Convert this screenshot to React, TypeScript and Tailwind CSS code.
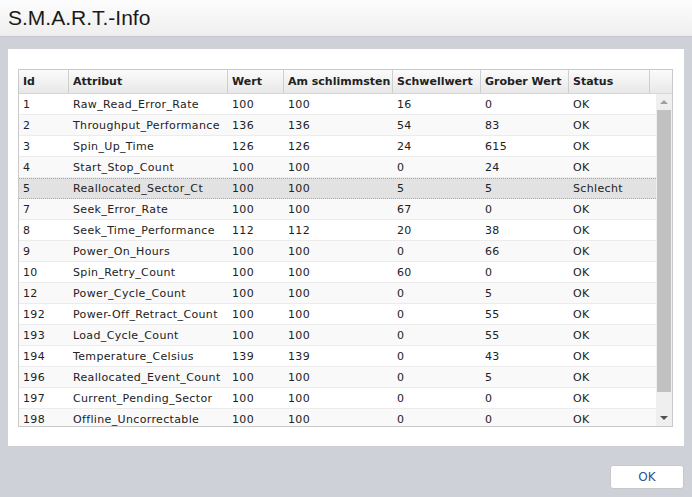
import React from 'react';

const rows: [string, string, string, string, string, string, string][] = [
  ['1', 'Raw_Read_Error_Rate', '100', '100', '16', '0', 'OK'],
  ['2', 'Throughput_Performance', '136', '136', '54', '83', 'OK'],
  ['3', 'Spin_Up_Time', '126', '126', '24', '615', 'OK'],
  ['4', 'Start_Stop_Count', '100', '100', '0', '24', 'OK'],
  ['5', 'Reallocated_Sector_Ct', '100', '100', '5', '5', 'Schlecht'],
  ['7', 'Seek_Error_Rate', '100', '100', '67', '0', 'OK'],
  ['8', 'Seek_Time_Performance', '112', '112', '20', '38', 'OK'],
  ['9', 'Power_On_Hours', '100', '100', '0', '66', 'OK'],
  ['10', 'Spin_Retry_Count', '100', '100', '60', '0', 'OK'],
  ['12', 'Power_Cycle_Count', '100', '100', '0', '5', 'OK'],
  ['192', 'Power-Off_Retract_Count', '100', '100', '0', '55', 'OK'],
  ['193', 'Load_Cycle_Count', '100', '100', '0', '55', 'OK'],
  ['194', 'Temperature_Celsius', '139', '139', '0', '43', 'OK'],
  ['196', 'Reallocated_Event_Count', '100', '100', '0', '5', 'OK'],
  ['197', 'Current_Pending_Sector', '100', '100', '0', '0', 'OK'],
  ['198', 'Offline_Uncorrectable', '100', '100', '0', '0', 'OK'],
];

const headers = ['Id', 'Attribut', 'Wert', 'Am schlimmsten', 'Schwellwert', 'Grober Wert', 'Status'];
const widths = ['w-[50px]', 'w-[159px]', 'w-[56px]', 'w-[109px]', 'w-[88px]', 'w-[88px]', 'w-[81px]'];

export default function App() {
  return (
    <div className="w-[692px] h-[497px] bg-[#ced1d8] flex flex-col overflow-hidden font-['DejaVu_Sans',Verdana,sans-serif] text-[#222]">
      {/* Title bar */}
      <div className="h-[37px] shrink-0 bg-gradient-to-b from-[#fdfdfd] to-[#eeeeee] border-b border-[#c4c6cc] flex items-center pl-[8px]">
        <span className="font-['Liberation_Sans',Arial,sans-serif] text-[21px] leading-none text-[#1a1a1a] pb-[2px]">
          S.M.A.R.T.-Info
        </span>
      </div>

      {/* Panel */}
      <div className="mt-[12px] ml-[8px] w-[676px] h-[397px] bg-white pl-[10px] pt-[20px]">
        <div className="w-[655px] h-[358px] border border-[#c9c9c9] flex flex-col overflow-hidden">
          {/* Header */}
          <div className="h-[24px] shrink-0 flex bg-gradient-to-b from-[#fbfbfb] to-[#e8e8e8] border-b border-[#d6d6d6]">
            {headers.map((h, i) => (
              <div
                key={h}
                className={`${widths[i]} shrink-0 border-r border-[#cfcfcf] pl-[4px] pt-[2px] flex items-center text-[11px] font-bold whitespace-nowrap overflow-hidden`}
              >
                {h}
              </div>
            ))}
            <div className="flex-1" />
          </div>

          {/* Body */}
          <div className="flex flex-1 min-h-0">
            <div className="w-[637px] overflow-hidden">
              {rows.map((r, idx) => {
                const sel = r[0] === '5';
                return (
                  <div
                    key={r[0]}
                    className={`h-[21px] flex items-center pt-[2px] text-[11px] tracking-[0.35px] ${
                      sel
                        ? 'bg-[#e2e2e2] border-y border-dotted border-[#a8a8a8]'
                        : `border-b border-[#ececec] ${idx % 2 === 1 ? 'bg-[#f9f9f9]' : 'bg-white'}`
                    }`}
                  >
                    {r.map((c, i) => (
                      <div key={i} className={`${widths[i]} shrink-0 pl-[4px] whitespace-nowrap`}>
                        {c}
                      </div>
                    ))}
                  </div>
                );
              })}
            </div>
            {/* Scrollbar */}
            <div className="w-[16px] bg-[#efefef] flex flex-col items-center">
              <div className="h-[16px] flex items-center justify-center">
                <div className="w-0 h-0 border-l-[4px] border-r-[4px] border-b-[4px] border-l-transparent border-r-transparent border-b-[#a0a0a0]" />
              </div>
              <div className="w-[14px] h-[282px] bg-[#c1c1c1]" />
              <div className="flex-1" />
              <div className="h-[16px] flex items-center justify-center">
                <div className="w-0 h-0 border-l-[4px] border-r-[4px] border-t-[4px] border-l-transparent border-r-transparent border-t-[#505050]" />
              </div>
            </div>
          </div>
        </div>
      </div>

      {/* Footer */}
      <div className="flex justify-end pr-[8px] pt-[19px]">
        <button className="w-[74px] h-[24px] bg-white border border-[#c8c8c8] rounded-[3px] text-[12px] text-[#2c4f96]">
          OK
        </button>
      </div>
    </div>
  );
}
